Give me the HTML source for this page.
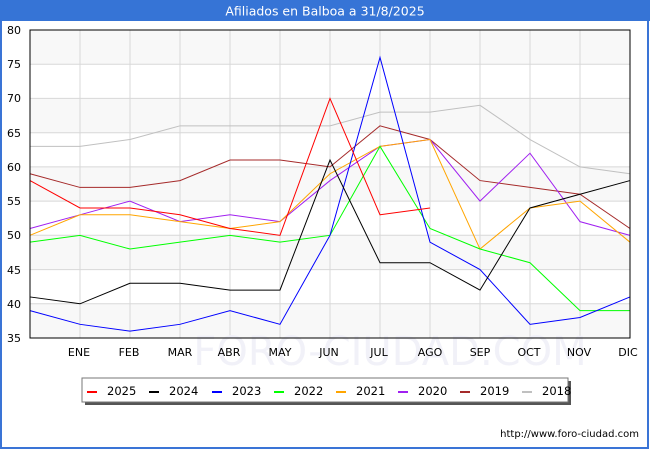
<!DOCTYPE html>
<html><head><meta charset="utf-8"><style>
html,body{margin:0;padding:0;background:#fff;}
body{width:650px;height:450px;overflow:hidden;font-family:"DejaVu Sans","Liberation Sans",sans-serif;}
</style></head><body>
<svg width="650" height="450" xmlns="http://www.w3.org/2000/svg" font-family="DejaVu Sans, Liberation Sans, sans-serif">
<rect x="0" y="0" width="650" height="450" fill="#fff"/>
<rect x="1" y="1" width="647" height="447" fill="none" stroke="#3a74d6" stroke-width="2"/>
<rect x="0" y="0" width="650" height="21" fill="#3674d6"/>
<text x="325" y="15.5" fill="#fff" font-size="12.5" text-anchor="middle">Afiliados en Balboa a 31/8/2025</text>
<g>
<rect x="30" y="30" width="600" height="34.2" fill="#f8f8f8"/>
<rect x="30" y="98.4" width="600" height="34.2" fill="#f8f8f8"/>
<rect x="30" y="166.9" width="600" height="34.2" fill="#f8f8f8"/>
<rect x="30" y="235.3" width="600" height="34.2" fill="#f8f8f8"/>
<rect x="30" y="303.8" width="600" height="34.2" fill="#f8f8f8"/>
</g>
<g stroke="#d8d8d8" stroke-width="1">
<path d="M30 64.2H630M30 98.4H630M30 132.7H630M30 166.9H630M30 201.1H630M30 235.3H630M30 269.6H630M30 303.8H630"/>
<path d="M80 30V338M130 30V338M180 30V338M230 30V338M280 30V338M330 30V338M380 30V338M430 30V338M480 30V338M530 30V338M580 30V338"/>
</g>
<text x="390" y="365" font-size="40" fill="#f0f0f8" text-anchor="middle" opacity="0.9">FORO-CIUDAD.COM</text>
<g fill="none" stroke-width="1" transform="translate(30,338) scale(50,-6.8444) translate(0,-35)">
<polyline vector-effect="non-scaling-stroke" stroke="#c0c0c0" points="0,63 1,63 2,64 3,66 4,66 5,66 6,66 7,68 8,68 9,69 10,64 11,60 12,59"/>
<polyline vector-effect="non-scaling-stroke" stroke="#a52a2a" points="0,59 1,57 2,57 3,58 4,61 5,61 6,60 7,66 8,64 9,58 10,57 11,56 12,51"/>
<polyline vector-effect="non-scaling-stroke" stroke="#a020f0" points="0,51 1,53 2,55 3,52 4,53 5,52 6,58 7,63 8,64 9,55 10,62 11,52 12,50"/>
<polyline vector-effect="non-scaling-stroke" stroke="#ffa500" points="0,50 1,53 2,53 3,52 4,51 5,52 6,59 7,63 8,64 9,48 10,54 11,55 12,49"/>
<polyline vector-effect="non-scaling-stroke" stroke="#00ff00" points="0,49 1,50 2,48 3,49 4,50 5,49 6,50 7,63 8,51 9,48 10,46 11,39 12,39"/>
<polyline vector-effect="non-scaling-stroke" stroke="#0000ff" points="0,39 1,37 2,36 3,37 4,39 5,37 6,50 7,76 8,49 9,45 10,37 11,38 12,41"/>
<polyline vector-effect="non-scaling-stroke" stroke="#000000" points="0,41 1,40 2,43 3,43 4,42 5,42 6,61 7,46 8,46 9,42 10,54 11,56 12,58"/>
<polyline vector-effect="non-scaling-stroke" stroke="#ff0000" points="0,58 1,54 2,54 3,53 4,51 5,50 6,70 7,53 8,54"/>
</g>
<rect x="30" y="30" width="600" height="308" fill="none" stroke="#000" stroke-width="1"/>
<g font-size="11" fill="#000" text-anchor="end">
<text x="21" y="34">80</text><text x="21" y="68">75</text><text x="21" y="102">70</text><text x="21" y="137">65</text><text x="21" y="171">60</text><text x="21" y="205">55</text><text x="21" y="239">50</text><text x="21" y="274">45</text><text x="21" y="308">40</text><text x="21" y="342">35</text>
</g>
<g font-size="11" fill="#000" text-anchor="middle">
<text x="79" y="356">ENE</text><text x="129" y="356">FEB</text><text x="180" y="356">MAR</text><text x="229" y="356">ABR</text><text x="280" y="356">MAY</text><text x="329" y="356">JUN</text><text x="379" y="356">JUL</text><text x="430" y="356">AGO</text><text x="480" y="356">SEP</text><text x="529" y="356">OCT</text><text x="579" y="356">NOV</text><text x="628" y="356">DIC</text>
</g>
<rect x="85" y="381" width="486" height="24" fill="#555"/>
<rect x="82" y="378" width="486" height="24" fill="#fff" stroke="#777" stroke-width="1"/>
<g font-size="11.5" fill="#000">
<rect x="87" y="391" width="10" height="2" fill="#ff0000"/><text x="107" y="395">2025</text>
<rect x="149" y="391" width="10" height="2" fill="#000"/><text x="169" y="395">2024</text>
<rect x="212" y="391" width="10" height="2" fill="#0000ff"/><text x="232" y="395">2023</text>
<rect x="274" y="391" width="10" height="2" fill="#00ff00"/><text x="294" y="395">2022</text>
<rect x="336" y="391" width="10" height="2" fill="#ffa500"/><text x="356" y="395">2021</text>
<rect x="398" y="391" width="10" height="2" fill="#a020f0"/><text x="418" y="395">2020</text>
<rect x="460" y="391" width="10" height="2" fill="#a52a2a"/><text x="480" y="395">2019</text>
<rect x="522" y="391" width="10" height="2" fill="#c0c0c0"/><text x="542" y="395">2018</text>
</g>
<text x="639" y="437" font-size="10" fill="#000" text-anchor="end">http://www.foro-ciudad.com</text>
</svg>
</body></html>
